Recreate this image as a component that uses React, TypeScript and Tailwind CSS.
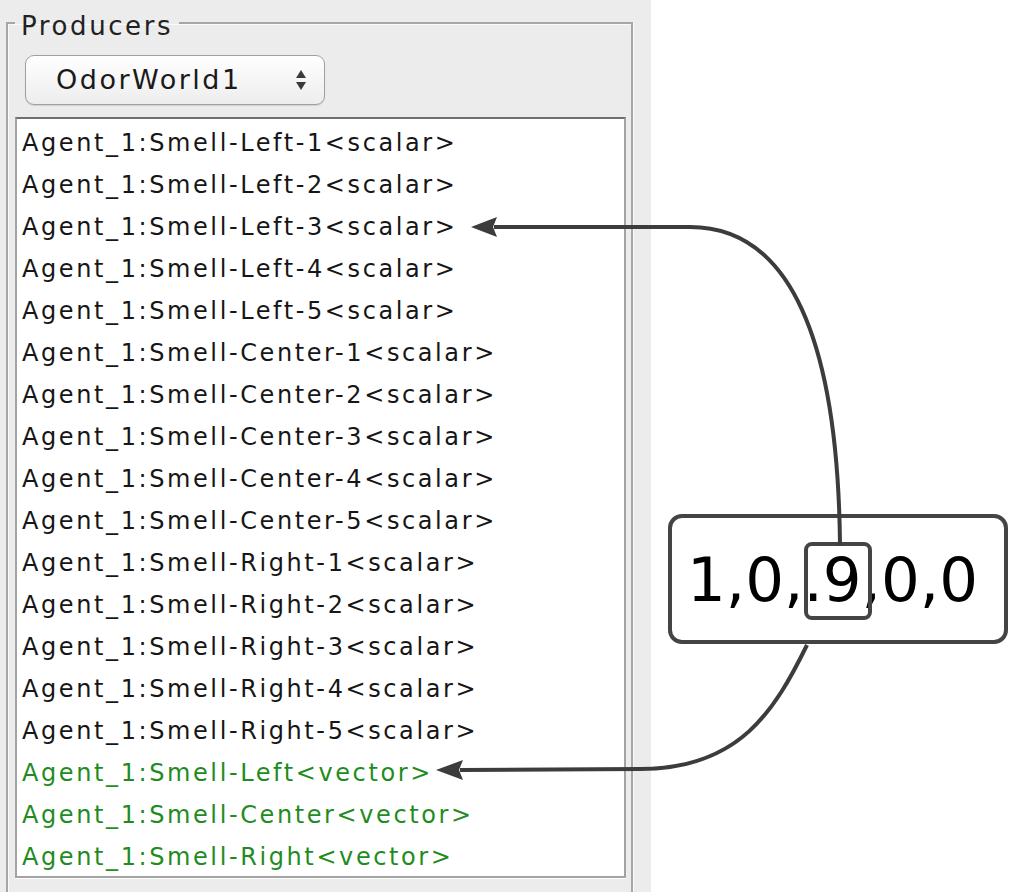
import React from 'react';

const producers: { name: string; type: 'scalar' | 'vector' }[] = [
  ...['Left', 'Center', 'Right'].flatMap(side =>
    [1, 2, 3, 4, 5].map(n => ({ name: `Agent_1:Smell-${side}-${n}`, type: 'scalar' as const }))
  ),
  { name: 'Agent_1:Smell-Left', type: 'vector' },
  { name: 'Agent_1:Smell-Center', type: 'vector' },
  { name: 'Agent_1:Smell-Right', type: 'vector' },
];

const uiFont = { fontFamily: '"DejaVu Sans", Verdana, sans-serif' };

function ProducerList() {
  return (
    <div className="h-[761px] bg-white border-2 border-[#a3a3a3] border-t-[#707070] pt-[3px] pl-[5px] shadow-[0_1px_0_#ffffff] overflow-hidden">
      {producers.map(p => (
        <div
          key={p.name + p.type}
          className={`h-[42px] leading-[42px] text-[24px] tracking-[2.6px] whitespace-nowrap ${
            p.type === 'vector' ? 'text-[#1f8c1f]' : 'text-[#161616]'
          }`}
        >
          {p.name}&lt;{p.type}&gt;
        </div>
      ))}
    </div>
  );
}

function WorldSelect() {
  return (
    <div className="ml-[10px] w-[300px] h-[50px] rounded-[9px] border border-[#a0a0a0] bg-gradient-to-b from-white to-[#ededed] shadow-[0_1px_1px_rgba(0,0,0,0.12)] flex items-center pl-[30px] pr-[17px]">
      <span className="flex-1 text-[27px] tracking-[2.5px] text-[#1a1a1a]">OdorWorld1</span>
      <svg width="12" height="24" viewBox="0 0 12 24">
        <path d="M6 2 L11 10 L1 10 Z" fill="#3a3a3a" />
        <path d="M6 22 L11 14 L1 14 Z" fill="#3a3a3a" />
      </svg>
    </div>
  );
}

export default function App() {
  return (
    <div className="relative flex w-[1011px] h-[892px] overflow-hidden bg-white" style={uiFont}>
      {/* producers panel */}
      <div className="w-[651px] shrink-0 bg-[#ececec] flex flex-col">
        <div className="h-[3px] bg-gradient-to-b from-[#d6d6d6] to-[#b8b8b8]" />
        <div className="h-[2px] bg-[#6a6a6a]" />
        <div className="pl-[6px] pr-[18px] pt-[8px]">
          <fieldset className="border-2 border-[#a6a6a6] pl-[7px] pr-[5px] pt-[17px] pb-[40px] shadow-[inset_1px_1px_0_#fafafa,1px_1px_0_#fafafa]">
            <legend className="px-[6px] text-[26px] leading-[30px] tracking-[2.6px] text-[#222]">
              <span className="relative top-[3px]">Producers</span>
            </legend>
            <WorldSelect />
            <div className="mt-[12px]">
              <ProducerList />
            </div>
          </fieldset>
        </div>
      </div>

      {/* encoded vector */}
      <div className="flex-1 pt-[514px] pl-[17px]">
        <div className="w-[340px] h-[130px] rounded-[14px] border-4 border-[#444] bg-white flex items-center pl-[15px]">
          <span className="text-[61px] leading-none text-black whitespace-nowrap">
            1,0,
            <span className="relative">
              .9
              <span className="absolute -top-[2px] -bottom-[5px] left-[1px] -right-[10px] border-4 border-[#444] rounded-[8px]" />
            </span>
            ,0,0
          </span>
        </div>
      </div>

      {/* connectors */}
      <svg className="absolute inset-0 pointer-events-none" width="1011" height="892" viewBox="0 0 1011 892">
        <path d="M 840 545 C 838 340, 790 227, 690 227 L 494 227" fill="none" stroke="#3c3c3c" strokeWidth="4" />
        <path d="M 471 227 L 497 217 L 493 227 L 497 237 Z" fill="#3c3c3c" />
        <path d="M 807 645 C 775 710, 740 769, 640 769 L 460 770" fill="none" stroke="#3c3c3c" strokeWidth="4" />
        <path d="M 436 770 L 463 760 L 459 770 L 463 780 Z" fill="#3c3c3c" />
      </svg>
    </div>
  );
}
